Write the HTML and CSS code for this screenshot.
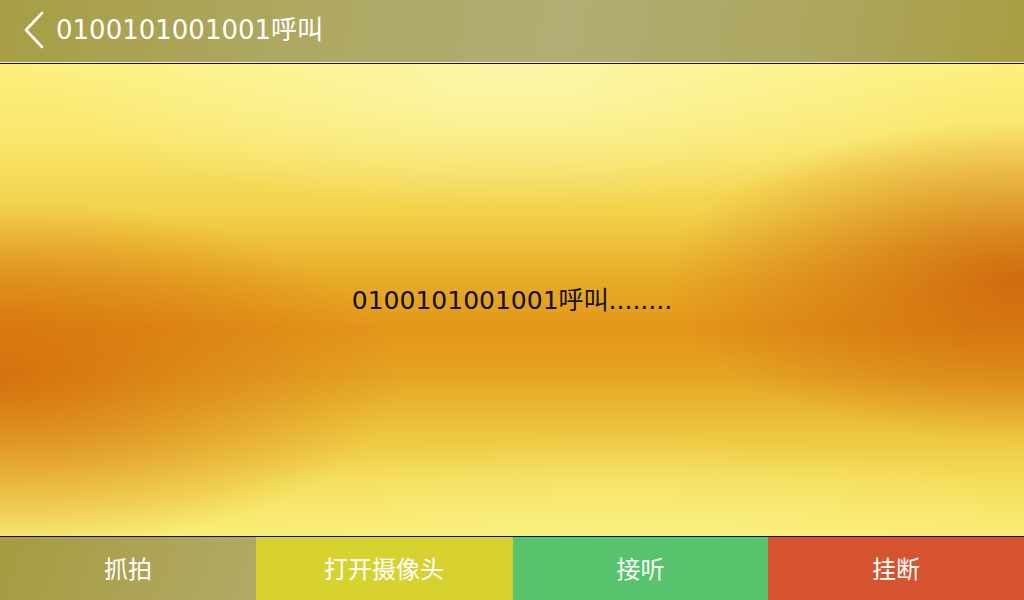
FILE: index.html
```html
<!DOCTYPE html>
<html lang="zh">
<head>
<meta charset="utf-8">
<title>呼叫</title>
<link rel="stylesheet" href="styles.css">
</head>
<body>
<div class="app">
  <header class="topbar">
    <svg class="back" width="24" height="38" viewBox="0 0 24 38" aria-hidden="true">
      <polyline points="20,2 4,19 20,36" fill="none" stroke="#ffffff" stroke-width="2.6" stroke-linecap="round" stroke-linejoin="round"/>
    </svg>
    <span class="title">0100101001001呼叫</span>
  </header>
  <main class="stage">
    <p class="status">0100101001001呼叫........</p>
  </main>
  <footer class="actions">
    <button class="act snap">抓拍</button>
    <button class="act camera">打开摄像头</button>
    <button class="act answer">接听</button>
    <button class="act hangup">挂断</button>
  </footer>
</div>
</body>
</html>
```
FILE: styles.css
```css
html, body {
  margin: 0;
  padding: 0;
  width: 1024px;
  height: 600px;
  overflow: hidden;
}
body {
  font-family: "DejaVu Sans", "Noto Sans CJK SC", sans-serif;
}
.app {
  display: flex;
  flex-direction: column;
  width: 1024px;
  height: 600px;
}
.topbar {
  height: 62px;
  flex: 0 0 auto;
  display: flex;
  align-items: center;
  padding-left: 22px;
  gap: 10px;
  border-bottom: 1px solid #f4f0c8;
  background: linear-gradient(100deg, #a79e45 0%, #aea862 30%, #b1ad74 55%, #ada65e 80%, #a89e42 100%);
}
.back {
  display: block;
  margin-top: -3px;
}
.title {
  color: #ffffff;
  font-size: 26px;
  line-height: 1;
  margin-top: -3px;
}
.stage {
  flex: 1 1 auto;
  display: flex;
  align-items: center;
  justify-content: center;
  border-top: 1px solid #14140a;
  border-bottom: 1px solid #14140a;
  background:
    radial-gradient(ellipse 400px 175px at 0% 66%, rgba(210, 105, 10, 0.85), rgba(210, 105, 10, 0) 100%),
    radial-gradient(ellipse 360px 160px at 100% 46%, rgba(205, 100, 10, 0.9), rgba(205, 100, 10, 0) 100%),
    radial-gradient(ellipse 480px 130px at 50% 3%, rgba(252, 248, 180, 0.8), rgba(252, 248, 180, 0) 100%),
    radial-gradient(ellipse 460px 100px at 60% 100%, rgba(251, 242, 140, 0.6), rgba(251, 242, 140, 0) 100%),
    linear-gradient(to bottom, #fcf07e 0%, #f9e66c 16%, #f2d04a 32%, #e8aa28 46%, #e3961a 56%, #e4a424 66%, #ebc03a 76%, #f4dc58 88%, #f9ee76 100%);
}
.status {
  margin: 0;
  font-size: 25px;
  color: #111111;
  line-height: 1;
}
.actions {
  flex: 0 0 63px;
  display: grid;
  grid-template-columns: repeat(4, 1fr);
}
.act {
  margin: 0;
  border: 0;
  padding: 0;
  color: #ffffff;
  font-family: "DejaVu Sans", "Noto Sans CJK SC", sans-serif;
  font-size: 24px;
  line-height: 1;
  display: flex;
  align-items: center;
  justify-content: center;
  padding-top: 2px;
}
.snap {
  background: linear-gradient(110deg, #a69b40 0%, #aca355 55%, #b1aa66 100%);
}
.camera {
  background: #d8d230;
}
.answer {
  background: #57c46d;
  border-left: 1px solid #c8d03a;
}
.hangup {
  background: #d6532f;
}
```
